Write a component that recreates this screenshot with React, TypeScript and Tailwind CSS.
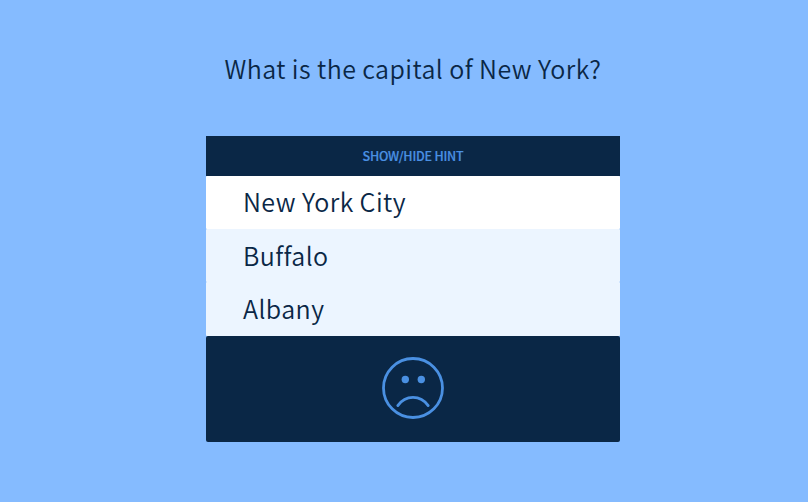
const answers = [
  { label: 'New York City', selected: true },
  { label: 'Buffalo', selected: false },
  { label: 'Albany', selected: false },
];

function SadFace() {
  return (
    <svg className="mb-[2px] h-[64px] w-[64px]" viewBox="0 0 64 64" fill="none" stroke="#4a90e2" strokeWidth="2.8" strokeLinecap="round">
      <circle cx="32" cy="32" r="29.5" />
      <path d="M16.8 49.6C24.5 38.6 39.5 38.6 47.2 49.6" />
      <circle cx="24.3" cy="23.5" r="3.7" fill="#4a90e2" stroke="none" />
      <circle cx="40.3" cy="23.5" r="3.7" fill="#4a90e2" stroke="none" />
    </svg>
  );
}

export default function App() {
  return (
    <main className="flex h-[502px] w-full flex-col items-center overflow-hidden bg-[#85bbff] pl-[18px] font-['Noto_Sans_CJK_SC','Noto_Sans',sans-serif] text-[#0a2746]">
      <h1 className="mt-[48px] h-[40px] whitespace-nowrap text-[25px] leading-[40px] font-[350] tracking-[0.42px]">
        What is the capital of New York?
      </h1>
      <section className="mt-[48px] flex w-[414px] flex-col">
        <button className="h-[40px] bg-[#0a2746] text-[12.5px] leading-[40px] font-medium tracking-[-0.22px] text-[#4a90e2] [-webkit-text-stroke:0.2px_#4a90e2]">
          SHOW/HIDE HINT
        </button>
        <ul>
          {answers.map(({ label, selected }) => (
            <li
              key={label}
              className={`h-[53px] rounded-[1px] pl-[37px] text-[25px] leading-[51px] font-[350] tracking-[0.42px] last:h-[54px] ${selected ? 'bg-white' : 'bg-[#ecf5ff] pt-px'}`}
            >
              {label}
            </li>
          ))}
        </ul>
        <div className="flex h-[106px] items-center justify-center rounded-[2px] bg-[#0a2746]">
          <SadFace />
        </div>
      </section>
    </main>
  );
}
